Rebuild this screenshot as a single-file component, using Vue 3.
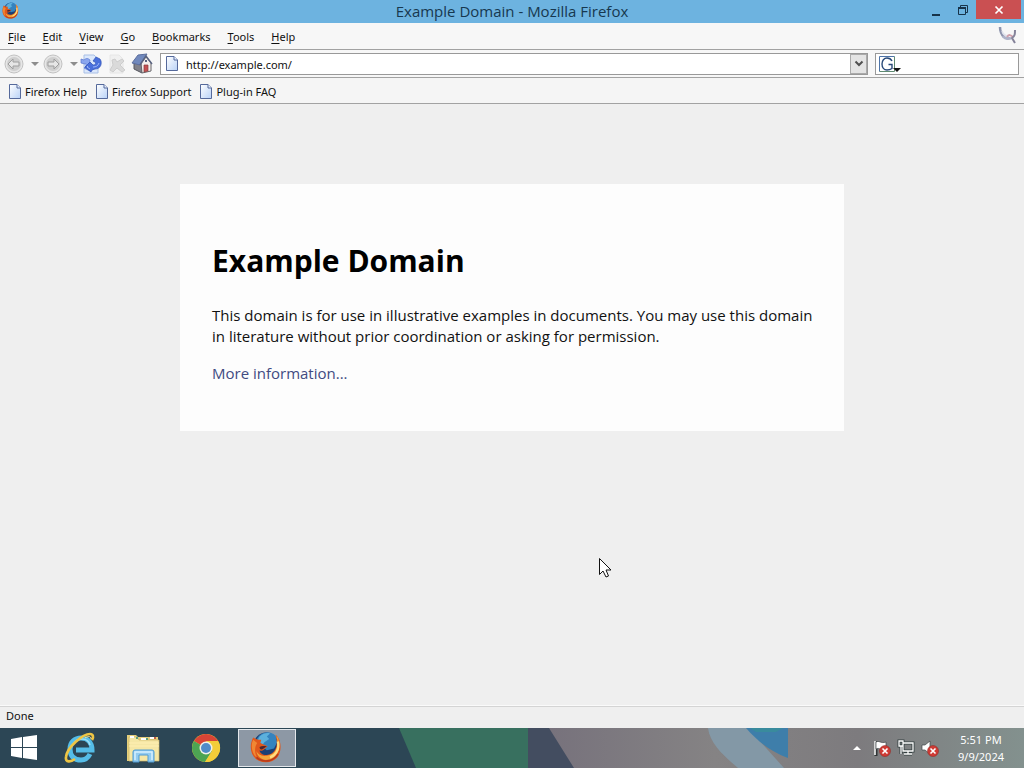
<template>
  <div class="desktop">
    <div class="window">
      <header class="titlebar">
        <svg class="title-icon" viewBox="0 0 40 40" aria-hidden="true"><use href="#fox" /></svg>
        <h2 class="title">{{ title }}</h2>
        <div class="window-buttons">
          <button type="button" aria-label="Minimize">
            <svg width="10" height="14" viewBox="0 0 10 14"><path d="M1 12h8" stroke="#17334a" stroke-width="2" /></svg>
          </button>
          <button type="button" aria-label="Restore">
            <svg width="12" height="12" viewBox="0 0 12 12" fill="none" stroke="#17334a">
              <path d="M3.5 3V1.5h7v7H9" />
              <path d="M1.500 4v6.500h7V4" />
              <path d="M1 4h8" stroke-width="2" />
            </svg>
          </button>
          <button type="button" class="close" aria-label="Close">
            <svg width="10" height="10" viewBox="0 0 10 10"><path d="M1.500 1.500l7 7M8.500 1.500l-7 7" stroke="#fff" stroke-width="1.700" /></svg>
          </button>
        </div>
      </header>

      <nav class="menubar">
        <button v-for="item in menu" :key="item" type="button">
          <u>{{ item[0] }}</u>{{ item.slice(1) }}
        </button>
        <svg class="throbber" width="20" height="20" viewBox="0 0 20 20" fill="none">
          <path d="M2 1c0 3 1 7 4 10" stroke="#8d94ad" stroke-width="2.500" />
          <path d="M5 10c2 3 6 3 8 2" stroke="#aeb3c9" stroke-width="3" />
          <path d="M4 5c1 4 4 5 7 5" stroke="#e0e2ec" stroke-width="1.500" />
          <path d="M9 11c2-3 4-2 6 0" stroke="#cf9fab" stroke-width="2" />
          <path d="M17 4c0 4 0 6-3 8l3 5" stroke="#85839a" stroke-width="2" />
        </svg>
      </nav>

      <div class="toolbar">
        <button type="button" class="tool" aria-label="Back">
          <svg width="20" height="20" viewBox="0 0 20 20">
            <circle cx="10" cy="10" r="9" fill="#e6e6e6" stroke="#c2c2c2" />
            <circle cx="10" cy="10" r="7" fill="#cecece" />
            <path d="M4 10l5-5v3h6v4H9v3z" fill="#e6e6e6" stroke="#9e9e9e" />
          </svg>
        </button>
        <button type="button" class="arrow" aria-label="Back history">
          <svg width="8" height="4" viewBox="0 0 8 4"><path d="M0 0h8L4 4z" fill="#8d8d8d" /></svg>
        </button>
        <button type="button" class="tool" aria-label="Forward">
          <svg width="20" height="20" viewBox="0 0 20 20">
            <circle cx="10" cy="10" r="9" fill="#e6e6e6" stroke="#c2c2c2" />
            <circle cx="10" cy="10" r="7" fill="#cecece" />
            <path d="M16 10l-5-5v3H5v4h6v3z" fill="#e6e6e6" stroke="#9e9e9e" />
          </svg>
        </button>
        <button type="button" class="arrow" aria-label="Forward history">
          <svg width="8" height="4" viewBox="0 0 8 4"><path d="M0 0h8L4 4z" fill="#8d8d8d" /></svg>
        </button>
        <button type="button" class="tool reload" aria-label="Reload">
          <svg width="22" height="20" viewBox="0 0 22 20">
            <path d="M4 1h10l4 4v14H4z" fill="#dce8fb" stroke="#a8bfe6" />
            <path d="M1 5l3 1c2-2 4-2 6 0l-1 5 3 3-2 3-6-3 2-2C6 10 6 9 5 10l-4-1z" fill="#8aa6ee" stroke="#5674ce" stroke-width=".7" />
            <path d="M21 7c1 5-2 8-6 8l-3 1-1 2-6-5 5-5 3 3c3 0 3-2 2-3l-2-1 3-4 4 2z" fill="#4a70dc" stroke="#2f50b4" stroke-width=".7" />
            <path d="M13 13c3 0 5-1 6-4M8 12l-1 1 3 2" stroke="#9db5f5" fill="none" />
          </svg>
        </button>
        <button type="button" class="tool stop" aria-label="Stop" disabled>
          <svg width="20" height="20" viewBox="0 0 20 20">
            <path d="M3 1h9l4 4v14H3z" fill="#f0f0f0" stroke="#e6e6e6" />
            <path d="M5 6l3-1 2 3 5-3 2 2-4 4 5 5-3 2-5-4-4 4-3-2 3-5z" fill="#dadada" stroke="#cdcdcd" />
          </svg>
        </button>
        <button type="button" class="tool home" aria-label="Home">
          <svg width="22" height="21" viewBox="0 0 22 21">
            <path d="M3 9v7l8 4V9z" fill="#82828a" stroke="#55565e" />
            <path d="M10 10l5-6 5 6v8l-9 2z" fill="#f4f0ec" stroke="#66656b" />
            <path d="M1 10L7 2l9-1-6 9-1 2z" fill="#7189bd" stroke="#5d6f9e" />
            <path d="M9 12l6-9 6 8" fill="none" stroke="#5a6480" stroke-width="1.500" />
            <path d="M13 12h4v6l-4 1z" fill="#c45152" stroke="#883c3d" stroke-width=".7" />
            <path d="M14 7h2v2h-2z" fill="#59637d" />
          </svg>
        </button>
        <div class="address">
          <svg class="page-icon" viewBox="0 0 12 15"><use href="#page" /></svg>
          <input v-model="url" type="text" aria-label="Address">
          <button type="button" aria-label="Show history">
            <svg width="10" height="8" viewBox="0 0 10 8"><path d="M1.500 1.500L5 5l3.500-3.500" fill="none" stroke="#505050" stroke-width="2" /></svg>
          </button>
        </div>
        <div class="search">
          <button type="button" aria-label="Search engine">
            <svg width="22" height="18" viewBox="0 0 22 18">
              <path d="M.5 1.500h15v15H.5z" fill="#fff" />
              <path d="M.5 16.500v-15h15" fill="none" stroke="#4e74a8" />
              <path d="M15.500 1.500v15H.5" fill="none" stroke="#5f8a72" />
              <path d="M13 6c-1-2-3-3-5-3C5 3 3 5.500 3 9s2 6 5 6c2 0 3.500-.5 5-1.500V9.500H9.500" fill="none" stroke="#274878" stroke-width="1.400" />
              <path d="M14 13h8l-4 4z" fill="#111" />
            </svg>
          </button>
          <input v-model="query" type="text" aria-label="Search">
        </div>
      </div>

      <nav class="bookmarks">
        <a v-for="item in bookmarks" :key="item" href="#">
          <svg class="page-icon" viewBox="0 0 12 15"><use href="#page" /></svg>
          {{ item }}
        </a>
      </nav>

      <main class="viewport">
        <article class="card">
          <h1>Example Domain</h1>
          <p>
            This domain is for use in illustrative examples in documents. You may use this
            domain in literature without prior coordination or asking for permission.
          </p>
          <p><a href="#">More information...</a></p>
        </article>
      </main>

      <footer class="statusbar">Done</footer>
    </div>

    <footer class="taskbar">
      <svg class="wallpaper" viewBox="0 0 1024 40" preserveAspectRatio="none" aria-hidden="true">
        <defs>
          <linearGradient id="rock">
            <stop offset="0" stop-color="#77727c" />
            <stop offset=".35" stop-color="#858384" />
            <stop offset=".65" stop-color="#7d7b7e" />
            <stop offset="1" stop-color="#83918e" />
          </linearGradient>
        </defs>
        <path d="M0 0h1024v40H0z" fill="#2c4655" />
        <path d="M399 0h130v40H416z" fill="#38705f" />
        <path d="M528 0h22l26 40h-48z" fill="#434d60" />
        <path d="M549 0h475v40H574z" fill="url(#rock)" />
        <path d="M708 0h40l36 40h-46c-14-12-28-24-30-40z" fill="#8398a6" />
        <path d="M746 0h42v30c-16-6-30-16-42-30z" fill="#3e7eaa" />
        <path d="M750 0h33l-7 4h-20z" fill="#398b9d" />
      </svg>
      <div class="apps">
        <button type="button" class="app" aria-label="Start">
          <svg width="28" height="26" viewBox="0 0 28 26" fill="#fff">
            <path d="M1 4l11-2v10H1zM13 2l14-2v12H13zM1 13h11v10L1 21zM13 13h14v12l-14-2z" />
          </svg>
        </button>
        <button type="button" class="app" aria-label="Internet Explorer">
          <svg width="32" height="32" viewBox="0 0 32 32" fill="none">
            <path d="M26 22c-2 4-5 6-9 6c-7 0-11-4-11-11S11 6 17 6s11 4 11 12H12" stroke="#55bde8" stroke-width="5" />
            <path d="M9 12c2-3 5-5 9-5c4 0 7 2 8 6" stroke="#9ce0f7" stroke-width="1.500" />
            <path d="M28 8c2-3 1-6-2-6C19 2 3 15 2 25c-1 6 5 5 9 2" stroke="#eec544" stroke-width="2.700" />
            <path d="M27 7c0-3-3-3-6-1" stroke="#fbe795" />
          </svg>
        </button>
        <button type="button" class="app" aria-label="File Explorer">
          <svg width="34" height="32" viewBox="0 0 34 32">
            <path d="M1 3h9l2 2h20v24H1z" fill="#e5cf7c" />
            <path d="M3 5h8l2 3h20v21H3z" fill="#f5e7a5" stroke="#cdb568" stroke-width=".7" />
            <path d="M4 4h4v2H4zM15 6h5v2h-5zM24 5h4v2h-4z" fill="#fff" />
            <path d="M10 5h2v2h-2zM20 6h2v2h-2z" fill="#5ea07a" />
            <path d="M28 5h2v2h-2z" fill="#c46045" />
            <path d="M3 11h30M3 14h30" stroke="#ffefb3" />
            <path d="M7 30V20q0-2 2-2h17q2 0 2 2v10h-6v-7h-9v7z" fill="#94ccef" stroke="#4f9bd3" />
            <path d="M9 28v-8h17v8" fill="none" stroke="#d5f0ff" stroke-width="1.500" />
          </svg>
        </button>
        <button type="button" class="app" aria-label="Chrome">
          <svg width="30" height="30" viewBox="0 0 30 30">
            <circle cx="15" cy="15" r="14" fill="#f3cd39" />
            <path d="M15 15L2.900 8A14 14 0 0 1 27.100 8z" fill="#d94436" />
            <path d="M2.900 8A14 14 0 0 0 14 29l7-11-6-3z" fill="#4da453" />
            <path d="M15 8h12.100A14 14 0 0 1 14 29l7-11z" fill="#f3cd39" />
            <circle cx="15" cy="15" r="6.500" fill="#f1f1e9" />
            <circle cx="15" cy="15" r="5" fill="#4f8cc9" />
          </svg>
        </button>
        <button type="button" class="app active" aria-label="Firefox">
          <svg width="32" height="32" viewBox="0 0 40 40">
            <g id="fox">
              <circle cx="20" cy="17" r="15" fill="#1b3f74" />
              <path d="M9 9c5-9 17-10 23-3l2 8-4 8-9 2-6-5-7-4z" fill="#3483bf" />
              <path d="M12 7c4-4 9-5 13-4l-4 4 3 3-6 4-2 3-7-4z" fill="#5cb0dc" />
              <path d="M4 8c-7 13-2 31 16 31c15 0 21-14 17-27c-1-3-3-6-5-7c4 13 0 24-11 25c-6 0-9-3-9-6c3 2 5 0 7-2l3-3-5-2-4-2 1-4c-4 0-7-1-10-3z" fill="#e0571b" />
              <path d="M33 6c4 13-1 24-12 25c-7 1-11-2-13-6c1 8 8 12 14 11c11-1 16-12 14-23c0-3-1-5-3-7z" fill="#f1a53b" />
              <path d="M4 11c-4 8-1 18 5 23c-4-8-3-15 0-19z" fill="#f08733" />
              <path d="M35 13c2 10-3 18-10 20" fill="none" stroke="#ffdc80" stroke-width="3" />
              <path d="M8 33c8 7 21 6 27-4" fill="none" stroke="#b83b1b" stroke-width="2" />
              <path d="M12 20c3-2 6-1 9-1l-4 3c-3 2-5 1-5-2z" fill="#4d2630" />
            </g>
          </svg>
        </button>
      </div>
      <div class="tray">
        <button type="button" class="more" aria-label="Show hidden icons">
          <svg width="8" height="4" viewBox="0 0 8 4"><path d="M0 4h8L4 0z" fill="#fff" /></svg>
        </button>
        <button type="button" aria-label="Action Center">
          <svg width="18" height="18" viewBox="0 0 18 18">
            <path d="M3 2v15" stroke="#303536" stroke-width="3" />
            <path d="M2 2v14" stroke="#fff" stroke-width="1.500" />
            <path d="M3 3c3-2 5 2 10 0v7c-5 2-7-2-10 0z" fill="#fff" stroke="#414647" stroke-width=".7" />
            <use href="#error" />
          </svg>
        </button>
        <button type="button" aria-label="Network">
          <svg width="18" height="18" viewBox="0 0 18 18" fill="none">
            <path d="M6 4h10v8H6zM11 12v3M7 15h8M2 2h4v5H2zM4 7v8" stroke="#344041" stroke-width="3" />
            <path d="M6 4h10v8H6zM11 12v3M7 15h8M2 2h4v5H2zM4 7v8" stroke="#fff" stroke-width="1.300" />
          </svg>
        </button>
        <button type="button" aria-label="Volume">
          <svg width="18" height="18" viewBox="0 0 18 18">
            <path d="M1 6h3l5-4v13l-5-4H1z" fill="#fff" stroke="#414647" stroke-width=".7" />
            <use href="#error" />
          </svg>
        </button>
        <button type="button" class="clock">
          <span>5:51 PM</span>
          <span>9/9/2024</span>
        </button>
      </div>
    </footer>

    <svg class="pointer" width="13" height="20" viewBox="0 0 13 20" aria-hidden="true">
      <path d="M.5.500v16l3.500-3.500 3 6 2.500-1-2.500-6h5z" fill="#fff" stroke="#111" />
    </svg>

    <!-- shared shapes -->
    <svg class="symbols" aria-hidden="true">
      <defs>
        <linearGradient id="sheet" x1="0" y1="0" x2="1" y2="1">
          <stop offset="0" stop-color="#fff" />
          <stop offset="1" stop-color="#b9d2f7" />
        </linearGradient>
        <g id="page">
          <path d="M.5.500H8L11.500 4v10.500H.5z" fill="url(#sheet)" stroke="#55699b" />
          <path d="M8 .5V4h3.500" fill="#e9f1ff" stroke="#55699b" />
        </g>
        <g id="error">
          <circle cx="12" cy="12" r="5.500" fill="#cf3b35" stroke="#8c2421" stroke-width=".5" />
          <path d="M9.500 9.500l5 5M14.500 9.500l-5 5" stroke="#fff" stroke-width="1.600" />
        </g>
      </defs>
    </svg>
  </div>
</template>

<script setup>
import { ref } from "vue";

const title = "Example Domain - Mozilla Firefox";
const url = ref("http://example.com/");
const query = ref("");

const menu = ["File", "Edit", "View", "Go", "Bookmarks", "Tools", "Help"];
const bookmarks = ["Firefox Help", "Firefox Support", "Plug-in FAQ"];
</script>

<style>
body {
  margin: 0;
}
</style>

<style scoped>
.desktop {
  position: relative;
  display: flex;
  flex-direction: column;
  min-height: 100vh;
  background: #efefef;
  color: #111;
  font-family: "Noto Sans", sans-serif;
  font-size: 11px;
}

button,
input {
  padding: 0;
  border: 0;
  background: none;
  color: inherit;
  font: inherit;
}

button {
  display: flex;
  align-items: center;
  justify-content: center;
}

input {
  min-width: 0;
  outline: 0;
}

a {
  color: inherit;
  text-decoration: none;
}

.window {
  flex: 1;
  display: flex;
  flex-direction: column;
}

.titlebar {
  display: grid;
  grid-template-columns: 1fr auto 1fr;
  align-items: start;
  height: 23px;
  background: #6db3e0;
  color: #17384f;
}

.title-icon {
  width: 17px;
  height: 17px;
  margin: 2px;
}

.title {
  margin: 0;
  font-family: "Open Sans", sans-serif;
  font-size: 15px;
  font-weight: 400;
  line-height: 23px;
}

.window-buttons {
  display: flex;
  justify-content: flex-end;
}

.window-buttons button {
  width: 27px;
  height: 19px;
}

.window-buttons .close {
  width: 45px;
  margin-right: 3px;
  background: #ca5052;
}

.menubar {
  display: flex;
  align-items: center;
  gap: 17px;
  height: 27px;
  padding: 0 6px 0 8px;
  box-sizing: border-box;
  border-bottom: 1px solid #a2a2a2;
  background: #f7f7f7;
}

.menubar button {
  display: block;
}

.menubar u {
  text-underline-offset: 2px;
}

.throbber {
  margin-left: auto;
}

.toolbar {
  display: flex;
  align-items: center;
  height: 28px;
  padding: 0 5px 0 4px;
  box-sizing: border-box;
  border-bottom: 1px solid #a2a2a2;
  background: #f7f7f7;
}

.arrow {
  width: 19px;
  padding-left: 2px;
}

.reload {
  margin-left: -2px;
}

.stop {
  margin-left: 5px;
}

.home {
  margin: 0 7px 0 4px;
}

.address,
.search {
  display: flex;
  align-items: center;
  height: 22px;
  box-sizing: border-box;
  border: 1px solid #999;
  background: #fff;
}

.address {
  flex: 1;
  gap: 8px;
  padding-left: 5px;
}

.address input,
.search input {
  flex: 1;
  padding-top: 2px;
}

.address button {
  width: 17px;
  height: 20px;
  box-sizing: border-box;
  border: 1px solid #aaa;
  background: #e4e4e4;
}

.search {
  width: 144px;
  margin-left: 7px;
  padding-left: 3px;
}

.page-icon {
  flex: none;
  width: 12px;
  height: 15px;
}

.bookmarks {
  display: flex;
  align-items: center;
  gap: 9px;
  height: 26px;
  padding: 1px 9px 0;
  box-sizing: border-box;
  border-bottom: 1px solid #a2a2a2;
  background: #f5f5f5;
}

.bookmarks a {
  display: flex;
  align-items: center;
  gap: 4px;
}

.viewport {
  flex: 1;
  padding: 80px 16px;
}

.card {
  max-width: 612px;
  margin: 0 auto;
  padding: 53px 20px 47px 32px;
  background: #fdfdfd;
  font-family: "Open Sans", sans-serif;
  font-size: 15px;
  line-height: 21px;
}

.card h1 {
  margin: 0 0 20px;
  color: #000;
  font-size: 30px;
  line-height: 48px;
}

.card p {
  margin: 0;
}

.card p + p {
  margin-top: 16px;
}

.card a {
  color: #414b82;
}

.statusbar {
  height: 22px;
  padding: 0 6px;
  box-sizing: border-box;
  border-top: 1px solid #d4d4d4;
  box-shadow: 0 -1px #fafafa;
  line-height: 17px;
}

.taskbar {
  position: relative;
  display: flex;
  align-items: center;
  justify-content: space-between;
  height: 40px;
  color: #fff;
}

.wallpaper {
  position: absolute;
  width: 100%;
  height: 100%;
}

.apps,
.tray {
  position: relative;
  display: flex;
  align-items: center;
}

.app {
  width: 62px;
  height: 38px;
}

.app:first-child {
  width: 48px;
}

.app + .app {
  margin-left: 1px;
}

.active {
  width: 58px;
  box-sizing: border-box;
  padding: 0 2px 2px 0;
  border: 1px solid #e4e8ec;
  background: #8d98a5;
}

.tray {
  gap: 6px;
  padding-right: 19px;
}

.more {
  margin-right: 6px;
}

.clock {
  flex-direction: column;
  width: 48px;
  margin-left: 12px;
  line-height: 17px;
}

.pointer {
  position: absolute;
  top: 558px;
  left: 599px;
}

.symbols {
  position: absolute;
  width: 0;
  height: 0;
}
</style>
